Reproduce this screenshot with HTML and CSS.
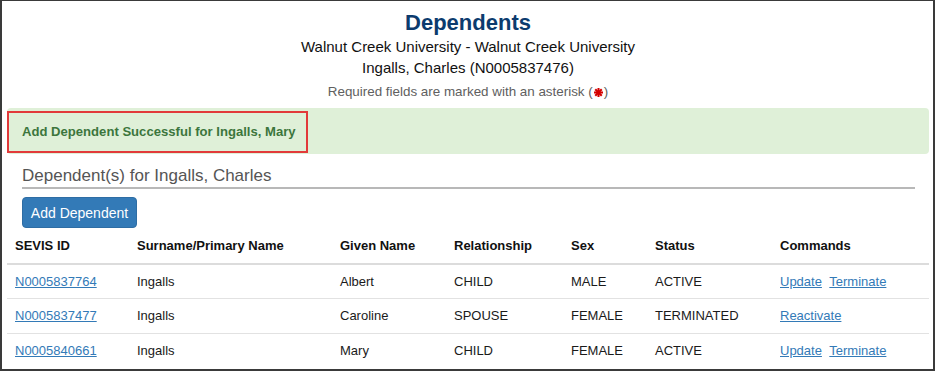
FILE: index.html
```html
<!DOCTYPE html>
<html>
<head>
<meta charset="utf-8">
<title>Dependents</title>
<link rel="stylesheet" href="styles.css">
</head>
<body>
<div class="frame">
  <div class="header">
    <h1 class="title">Dependents</h1>
    <div class="subline">Walnut Creek University - Walnut Creek University</div>
    <div class="subline">Ingalls, Charles (N0005837476)</div>
    <div class="required">Required fields are marked with an asterisk (<svg class="asterisk" width="9" height="9" viewBox="0 0 10 10"><g stroke="#d40000" stroke-width="2.3"><line x1="5" y1="0" x2="5" y2="10"/><line x1="0" y1="5" x2="10" y2="5"/><line x1="1.4" y1="1.4" x2="8.6" y2="8.6"/><line x1="8.6" y1="1.4" x2="1.4" y2="8.6"/></g></svg>)</div>
  </div>

  <div class="alert">
    <span class="alert-text">Add Dependent Successful for Ingalls, Mary</span>
    <div class="highlight"></div>
  </div>

  <div class="legend">Dependent(s) for Ingalls, Charles</div>

  <button class="btn">Add Dependent</button>

  <table class="grid">
    <colgroup>
      <col class="c1"><col class="c2"><col class="c3"><col class="c4"><col class="c5"><col class="c6"><col class="c7">
    </colgroup>
    <thead>
      <tr>
        <th>SEVIS ID</th>
        <th>Surname/Primary Name</th>
        <th>Given Name</th>
        <th>Relationship</th>
        <th>Sex</th>
        <th>Status</th>
        <th>Commands</th>
      </tr>
    </thead>
    <tbody>
      <tr>
        <td><a href="#">N0005837764</a></td>
        <td>Ingalls</td>
        <td>Albert</td>
        <td>CHILD</td>
        <td>MALE</td>
        <td>ACTIVE</td>
        <td><a href="#" class="cmd">Update</a> <a href="#">Terminate</a></td>
      </tr>
      <tr>
        <td><a href="#">N0005837477</a></td>
        <td>Ingalls</td>
        <td>Caroline</td>
        <td>SPOUSE</td>
        <td>FEMALE</td>
        <td>TERMINATED</td>
        <td><a href="#">Reactivate</a></td>
      </tr>
      <tr>
        <td><a href="#">N0005840661</a></td>
        <td>Ingalls</td>
        <td>Mary</td>
        <td>CHILD</td>
        <td>FEMALE</td>
        <td>ACTIVE</td>
        <td><a href="#" class="cmd">Update</a> <a href="#">Terminate</a></td>
      </tr>
    </tbody>
  </table>
</div>
</body>
</html>
```

FILE: styles.css
```css
html, body {
  margin: 0;
  padding: 0;
  background: #ffffff;
}

body {
  font-family: "Liberation Sans", Arial, sans-serif;
  color: #111;
}

.frame {
  box-sizing: border-box;
  width: 935px;
  height: 371px;
  border: 2px solid #3a3a3a;
  border-top-width: 1px;
  padding: 9px 4px 0 5px;
  overflow: hidden;
  background: #fff;
}

.header {
  text-align: center;
}

.title {
  margin: 0;
  font-size: 22px;
  line-height: 26px;
  font-weight: bold;
  color: #0c3b6e;
}

.subline {
  font-size: 15px;
  line-height: 21px;
  color: #111;
}

.required {
  margin-top: 5px;
  font-size: 13.4px;
  line-height: 18px;
  color: #606060;
}

.asterisk {
  display: inline-block;
  vertical-align: -0.5px;
  margin: 0 1px;
}

.alert {
  position: relative;
  margin-top: 7px;
  height: 46px;
  box-sizing: border-box;
  padding: 14px 15px;
  background: #dff0d8;
  border-radius: 4px;
}

.alert-text {
  font-size: 13.1px;
  line-height: 18px;
  font-weight: bold;
  color: #3c763d;
}

.highlight {
  position: absolute;
  left: 0;
  top: 3px;
  width: 301px;
  height: 42px;
  box-sizing: border-box;
  border: 2px solid #e23a3a;
}

.legend {
  margin: 12px 14px 0 15px;
  font-size: 17px;
  line-height: 20px;
  color: #555;
  border-bottom: 2px solid #b8b8b8;
  padding-bottom: 1px;
}

.btn {
  display: block;
  margin: 8px 0 0 15px;
  width: 115px;
  height: 31px;
  padding: 0;
  text-align: center;
  white-space: nowrap;
  font-family: "Liberation Sans", Arial, sans-serif;
  font-size: 14px;
  color: #fff;
  background: #337ab7;
  border: 1px solid #2e6da4;
  border-radius: 4px;
}

.grid {
  width: 922px;
  margin-top: 1px;
  border-collapse: collapse;
  table-layout: fixed;
  font-size: 13px;
}

.c1 { width: 122px; }
.c2 { width: 203px; }
.c3 { width: 114px; }
.c4 { width: 117px; }
.c5 { width: 84px; }
.c6 { width: 125px; }
.c7 { width: 157px; }

.grid th {
  text-align: left;
  font-weight: bold;
  color: #111;
  padding: 8px 8px;
  line-height: 17.5px;
  border-bottom: 2px solid #dcdcdc;
  white-space: nowrap;
}

.grid td {
  padding: 8px 8px;
  line-height: 17.5px;
  color: #1a1a1a;
  border-top: 1px solid #e2e2e2;
  white-space: nowrap;
}

.grid tbody tr:first-child td {
  border-top: none;
}

.grid a {
  color: #337ab7;
  text-decoration: underline;
}

.grid a.cmd {
  margin-right: 4px;
}
```
